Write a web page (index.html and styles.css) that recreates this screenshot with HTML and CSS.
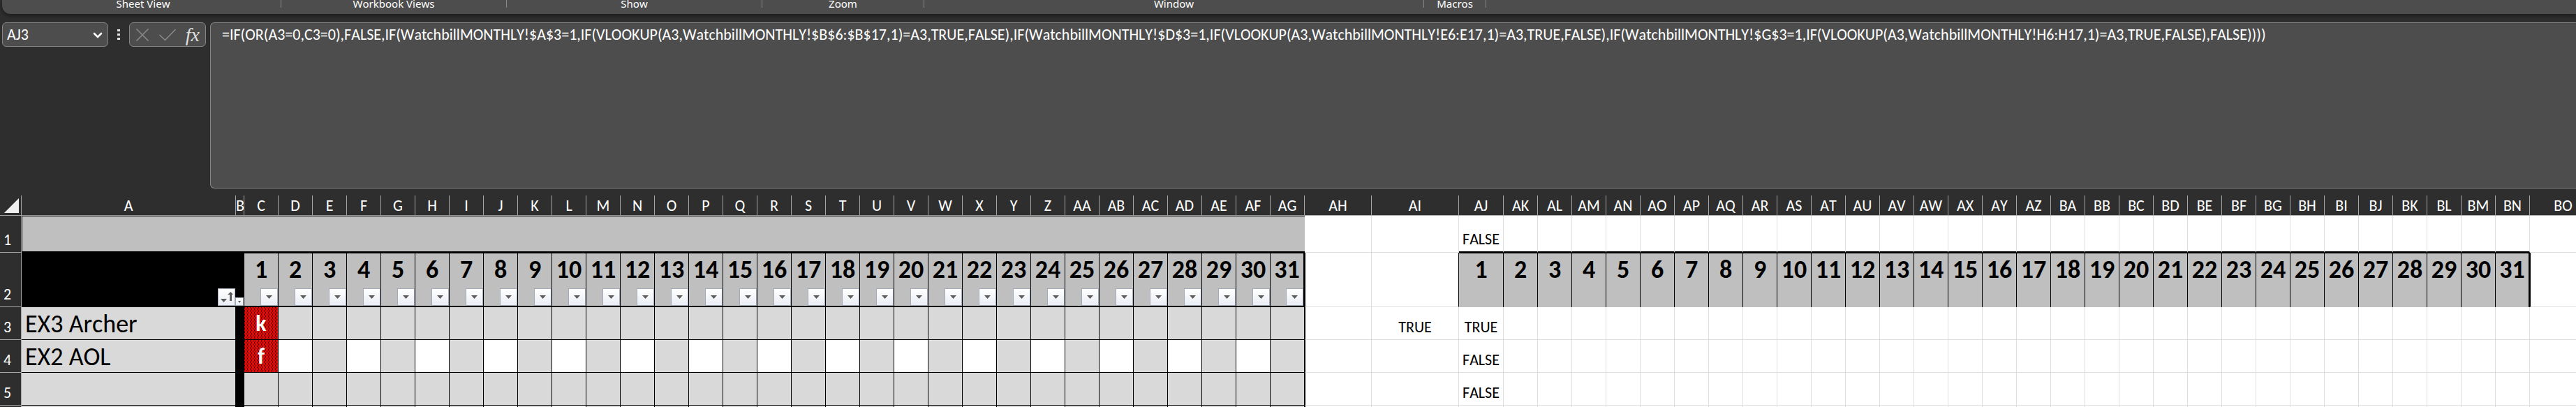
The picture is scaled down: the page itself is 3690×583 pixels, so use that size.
FILE: index.html
```html
<!DOCTYPE html>
<html lang="en">
<head>
<meta charset="utf-8">
<title>Watchbill workbook</title>
<link rel="stylesheet" href="styles.css">
</head>
<body>
<header class="ribbon">
  <div class="group group-sheet">Sheet View</div>
  <div class="group group-views">Workbook Views</div>
  <div class="group group-show">Show</div>
  <div class="group group-zoom">Zoom</div>
  <div class="group group-window">Window</div>
  <div class="group group-macros">Macros</div>
</header>

<section class="formula-bar">
  <div class="name-box">
    <input class="name-input" type="text" value="AJ3" aria-label="Name box">
    <button class="icon-button" aria-label="Show names">
      <svg width="16" height="12" viewBox="0 0 16 12"><path d="M3 4l5 5 5-5" fill="none" stroke="#fff" stroke-width="2.6" stroke-linecap="round"/></svg>
    </button>
  </div>
  <svg class="grip" width="4" height="16" viewBox="0 0 4 16" aria-hidden="true"><path d="M0 0h4v3H0zM0 6h4v3H0zM0 12h4v3H0z" fill="#e6e6e6"/></svg>
  <div class="entry-tools">
    <button class="icon-button" aria-label="Cancel">
      <svg width="20" height="20" viewBox="0 0 20 20"><path d="M1.500 1.500l17 17M18.500 1.500l-17 17" fill="none" stroke="#8c8c8c" stroke-width="1.500"/></svg>
    </button>
    <button class="icon-button" aria-label="Enter">
      <svg width="26" height="20" viewBox="0 0 26 20"><path d="M1.500 10l8 7.500L24.500 2" fill="none" stroke="#8c8c8c" stroke-width="1.500"/></svg>
    </button>
    <button class="icon-button fx" aria-label="Insert function">fx</button>
  </div>
  <textarea class="formula" aria-label="Formula" spellcheck="false" wrap="off">=IF(OR(A3=0,C3=0),FALSE,IF(WatchbillMONTHLY!$A$3=1,IF(VLOOKUP(A3,WatchbillMONTHLY!$B$6:$B$17,1)=A3,TRUE,FALSE),IF(WatchbillMONTHLY!$D$3=1,IF(VLOOKUP(A3,WatchbillMONTHLY!E6:E17,1)=A3,TRUE,FALSE),IF(WatchbillMONTHLY!$G$3=1,IF(VLOOKUP(A3,WatchbillMONTHLY!H6:H17,1)=A3,TRUE,FALSE),FALSE))))</textarea>
</section>

<main class="sheet">
  <table class="grid">
    <colgroup>
      <col class="w-head"><col class="w-name"><col class="w-narrow"><col class="w-day" span="31">
      <col class="w-wide"><col class="w-ai"><col class="w-aj"><col class="w-day" span="30"><col class="w-wide">
    </colgroup>
    <thead id="head"></thead>
    <tbody id="body"></tbody>
  </table>
</main>
<script src="script.js"></script>
</body>
</html>
```
FILE: styles.css
```css
* { box-sizing: border-box; }

html, body { height: 100%; }

body {
  margin: 0;
  display: flex;
  flex-direction: column;
  overflow: hidden;
  background: #2e2e2e;
  color: #fff;
  font-family: Carlito, Calibri, Lato, sans-serif;
  font-size: 22px;
  font-kerning: none;
}

button, input, textarea { font: inherit; font-kerning: none; color: inherit; margin: 0; }

.ribbon {
  flex: none;
  display: flex;
  margin-left: 3px;
  padding: 0 0 9px 5px;
  background: #4d4d4d;
  border-bottom-left-radius: 12px;
  box-shadow: 0 2px 6px rgba(0, 0, 0, .5);
  font-family: "Noto Sans", "Open Sans", sans-serif;
  font-size: 15px;
  line-height: 10px;
}
.group { flex: none; height: 11px; text-align: center; white-space: nowrap; border-right: 1px solid #8a8a8a; }
.group-sheet { width: 395px; }
.group-views { width: 323px; }
.group-show { width: 366px; }
.group-zoom { width: 232px; }
.group-window { width: 716px; }
.group-macros { width: 89px; }

.formula-bar { flex: none; display: flex; align-items: flex-start; margin-top: 12px; padding-left: 3px; }
.name-box, .entry-tools, .formula { background: #4d4d4d; border: 1px solid #858585; border-radius: 6px; }
.name-box { display: flex; align-items: center; width: 152px; height: 35px; padding: 0 6px; }
.name-input { flex: 1; min-width: 0; height: 27px; padding: 0; border: 0; background: none; line-height: 27px; }
.icon-button { display: flex; padding: 0; border: 0; background: none; }
.grip { margin: 10px 13px 0 13px; }
.entry-tools { display: flex; align-items: center; justify-content: space-between; width: 110px; height: 35px; padding: 0 8px; }
.fx { color: #dedede; font: italic 28px/30px "Liberation Serif", serif; }
.formula {
  flex: 1;
  height: 238px;
  margin-left: 6px;
  padding: 3px 0 0 16px;
  border-right: 0;
  border-radius: 6px 0 0 6px;
  line-height: 27px;
  white-space: pre;
  overflow: hidden;
  resize: none;
}

.sheet { flex: 1; min-height: 0; margin-top: 10px; overflow: hidden; background: #fff; color: #000; }
.grid { table-layout: fixed; width: 0; border-collapse: separate; border-spacing: 0; line-height: 26px; }
.w-head { width: 31px; }
.w-name { width: 307px; }
.w-narrow { width: 12px; }
.w-day { width: 49px; }
.w-wide { width: 96px; }
.w-ai { width: 125px; }
.w-aj { width: 64px; }

.grid th, .grid td { padding: 0; text-align: center; white-space: nowrap; }
.grid th { background: #2e2e2e; color: #fff; font-weight: 400; vertical-align: bottom; border: 0 solid #a6a6a6; border-width: 0 1px 1px 0; }
.grid .row-head { padding: 0 9px 4px 0; }
.corner svg { display: block; margin: 0 0 3px 6px; }

.row-heads { height: 29px; }
.row-1 { height: 53px; }
.row-2 { height: 78px; }
.row-n { height: 47px; }

.grid .plain { border: 0 solid #dedede; border-width: 0 1px 1px 0; vertical-align: bottom; padding-bottom: 4px; }
.grid .banner { background: #bfbfbf; border: solid #000; border-width: 1px 0 2px 1px; }
.grid .above-day { border-bottom: 2px solid #000; }
.grid .day { background: #bfbfbf; border: 0 solid #000; border-width: 1px 1px 2px 0; vertical-align: top; font-size: 36px; font-weight: 700; line-height: 44px; }
.grid .day-open { border-bottom: 0; padding-top: 1px; }
.grid .black { background: #000; border: 0 solid #000; border-width: 1px 1px 2px 0; }
.grid .before-day { border-right-color: #000; }
.grid .last { border-right: 2px solid #000; }
.grid .after-last { border-left: 1px solid #000; }
.grid .name { background: #d9d9d9; border: 0 solid #000; border-width: 0 1px 1px 0; padding: 2px 0 0 5px; text-align: left; font-size: 36px; line-height: 44px; }
.grid .slot { background: #d9d9d9; border: 0 solid #000; border-width: 0 1px 1px 0; }
.grid .free { background: #fff; }
.grid .taken {
  background-color: #f00;
  background-image:
    conic-gradient(from 270deg at 1px 1px, #000 90deg, transparent 0),
    conic-gradient(from 270deg at 1px 1px, #000 90deg, transparent 0);
  background-size: 4px 2px;
  background-position: 0 0, 2px 1px;
  color: #fff;
  font-size: 32px;
  font-weight: 700;
  line-height: 39px;
}

.filter-cell { display: flex; flex-direction: column; justify-content: space-between; min-height: 75px; padding-top: 1px; }
.filter { align-self: flex-end; display: flex; align-items: center; justify-content: center; width: 25px; height: 25px; padding: 0; border: 1px solid #a3abb8; background: linear-gradient(#fff, #e9edf4); }
.filter-small { width: 12px; height: 12px; }
```
FILE: script.js
```js
const COLUMNS = 66;
const FIRST_DAY = 3, LAST_DAY = 33, AI = 35, AJ = 36, LAST_COPY = 66;

const arrow = '<svg width="9" height="5" viewBox="0 0 9 5"><path d="M0 0h9L4.500 5z" fill="#5c5c5c"/></svg>';
const smallArrow = '<svg width="4" height="3" viewBox="0 0 4 3"><path d="M0 0h4L2 3z" fill="#5c5c5c"/></svg>';
const sortArrow = '<svg width="23" height="23" viewBox="0 0 23 23"><path d="M3 14h9l-4.500 5z" fill="#5c5c5c"/><path d="M16 17V8h-3l4.500-4L21 8h-2v9z" fill="#5c5c5c"/></svg>';

function columnName(n) {
  return n > 26 ? String.fromCharCode(64 + Math.floor((n - 1) / 26)) + String.fromCharCode(65 + (n - 1) % 26) : String.fromCharCode(64 + n);
}

function cell(cls, content = '') {
  return `<td class="${cls}">${content}</td>`;
}

function filterButton(label, icon, cls = '') {
  return `<button class="filter ${cls}" aria-label="${label}">${icon}</button>`;
}

function headings() {
  let html = '<tr class="row-heads"><th class="corner"><svg width="21" height="21" viewBox="0 0 21 21"><path d="M21 0v21H0z" fill="#f0f0f0"/></svg></th>';
  for (let n = 1; n <= COLUMNS + 1; n++) html += `<th scope="col">${columnName(n)}</th>`;
  return html + '</tr>';
}

function rowOne() {
  let html = '<tr class="row-1"><th class="row-head" scope="row">1</th><td class="banner" colspan="33"></td>';
  for (let n = 34; n <= COLUMNS + 1; n++) {
    const copy = n >= AJ && n <= LAST_COPY;
    html += cell(copy ? 'plain above-day' : 'plain', n === AJ ? 'FALSE' : '');
  }
  return html + '</tr>';
}

function rowTwo() {
  let html = '<tr class="row-2"><th class="row-head" scope="row">2</th>';
  html += cell('black', `<div class="filter-cell"><span></span>${filterButton('Sort and filter names', sortArrow)}</div>`);
  html += cell('black', `<div class="filter-cell"><span></span>${filterButton('Filter column B', smallArrow, 'filter-small')}</div>`);
  for (let d = 1; d <= 31; d++) {
    html += cell(d === 31 ? 'day last' : 'day', `<div class="filter-cell"><span>${d}</span>${filterButton('Filter day ' + d, arrow)}</div>`);
  }
  html += cell('plain after-last') + cell('plain before-day');
  for (let d = 1; d <= 31; d++) html += cell(d === 31 ? 'day day-open last' : 'day day-open', d);
  return html + cell('plain after-last') + '</tr>';
}

function personRow(row, label, name, mark, ai, aj) {
  let html = `<tr class="row-n"><th class="row-head" scope="row">${label}</th>` + cell('name', name) + cell('black');
  for (let n = FIRST_DAY; n <= LAST_DAY; n++) {
    const day = n - FIRST_DAY + 1;
    let cls = 'slot';
    if (day === 1 && mark) cls += ' taken';
    else if (row % 2 === 0 && day % 2 === 0) cls += ' free';
    if (n === LAST_DAY) cls += ' last';
    html += cell(cls, day === 1 ? mark : '');
  }
  for (let n = 34; n <= COLUMNS + 1; n++) {
    html += cell(n === 34 ? 'plain after-last' : 'plain', n === AI ? ai : n === AJ ? aj : '');
  }
  return html + '</tr>';
}

document.getElementById('head').innerHTML = headings();
document.getElementById('body').innerHTML = rowOne() + rowTwo() +
  personRow(3, '3', 'EX3 Archer', 'k', 'TRUE', 'TRUE') +
  personRow(4, '4', 'EX2 AOL', 'f', '', 'FALSE') +
  personRow(5, '5', '', '', '', 'FALSE') +
  personRow(6, '', '', '', '', '');
```
